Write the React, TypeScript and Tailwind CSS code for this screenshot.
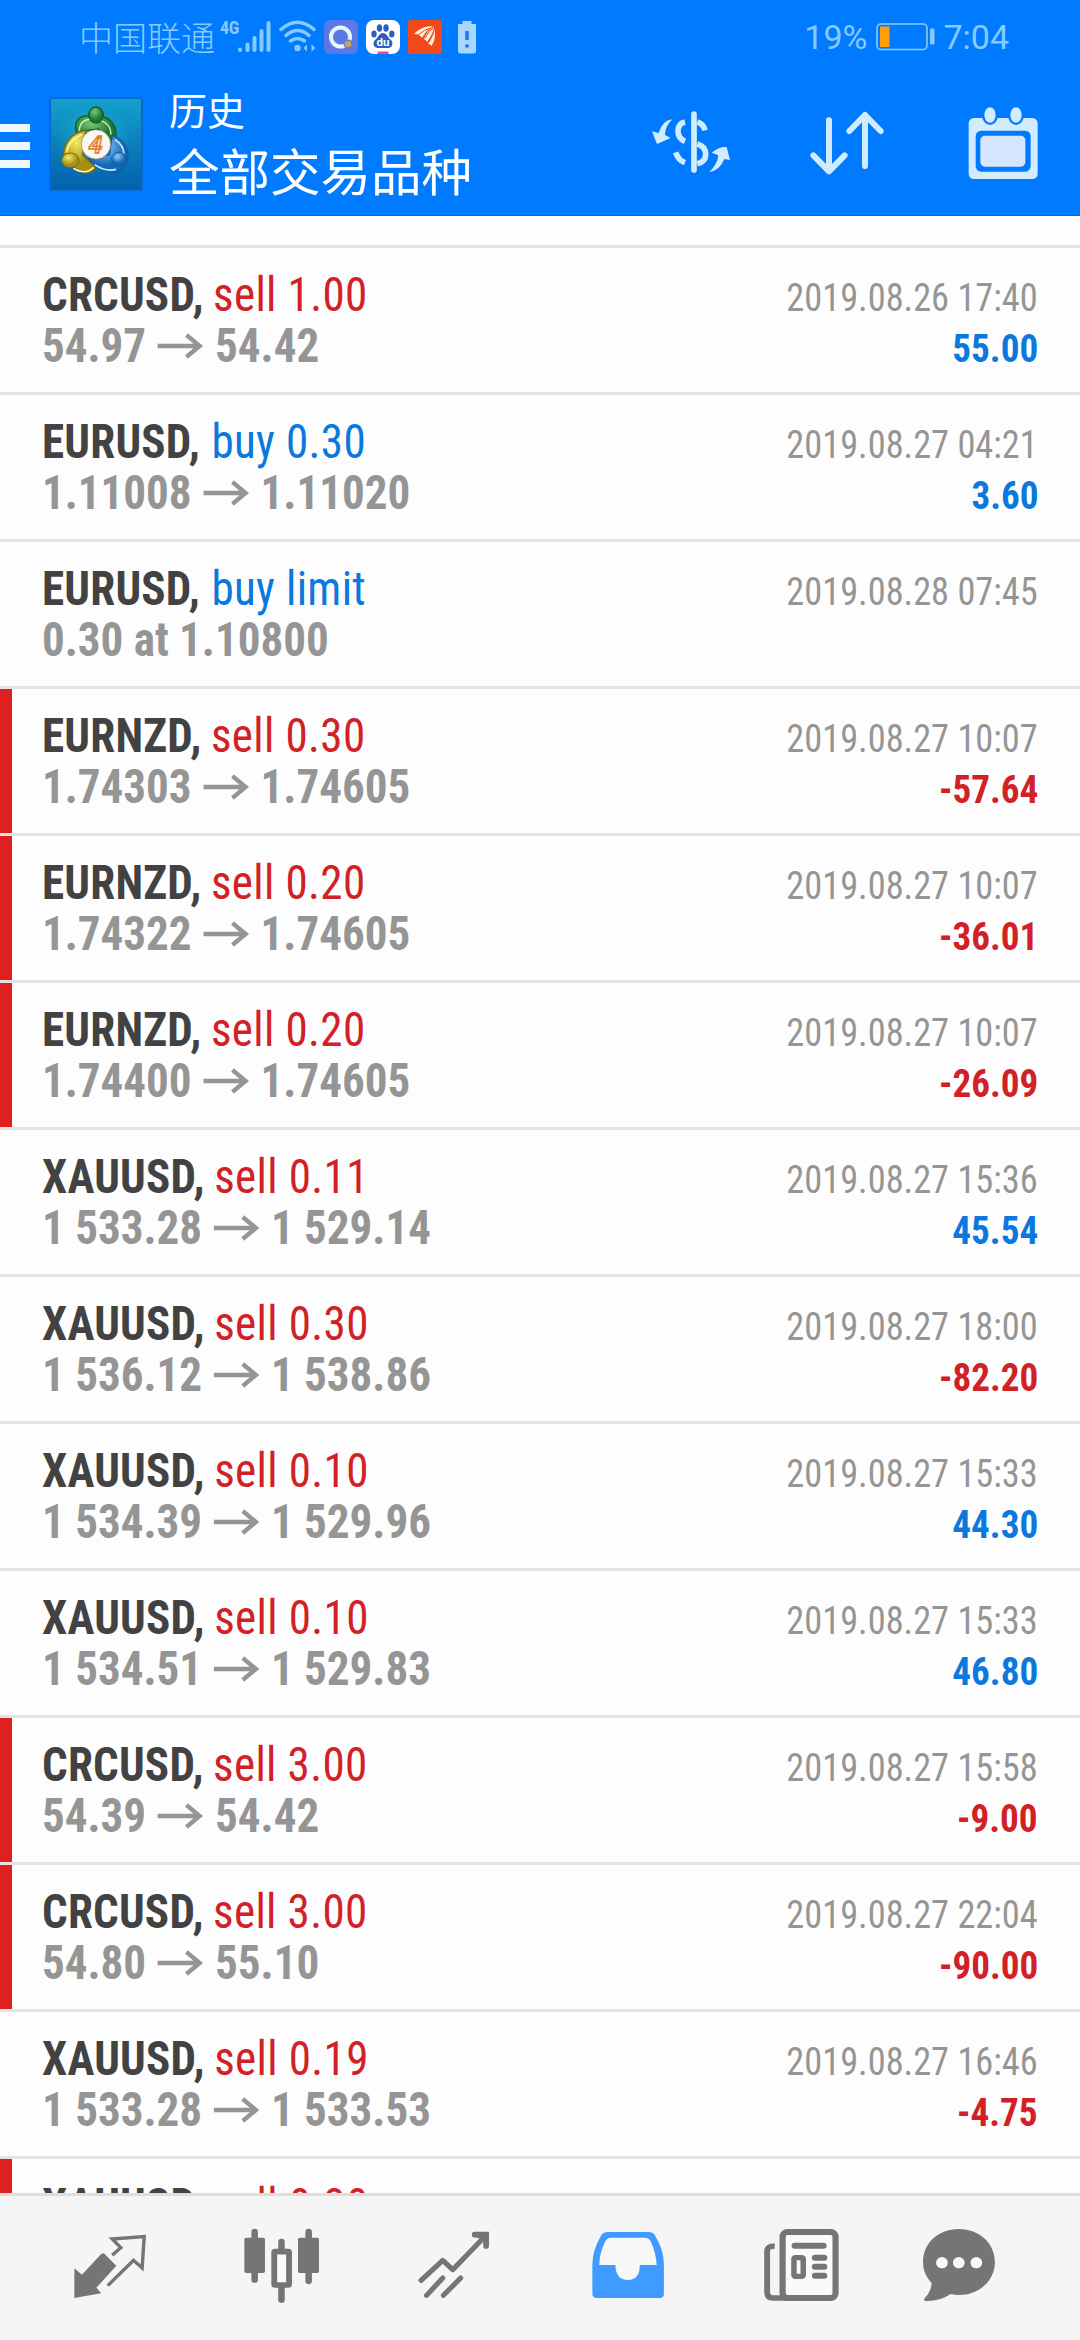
import type { ReactNode } from 'react';
import clsx from 'clsx';

type Deal = {
  symbol: string;
  side: 'sell' | 'buy';
  action: string;
  from?: string;
  to?: string;
  note?: string;
  time?: string;
  profit?: string;
  marked?: boolean;
};

const deals: Deal[] = [
  { symbol: 'CRCUSD', side: 'sell', action: 'sell 1.00', from: '54.97', to: '54.42', time: '2019.08.26 17:40', profit: '55.00' },
  { symbol: 'EURUSD', side: 'buy', action: 'buy 0.30', from: '1.11008', to: '1.11020', time: '2019.08.27 04:21', profit: '3.60' },
  { symbol: 'EURUSD', side: 'buy', action: 'buy limit', note: '0.30 at 1.10800', time: '2019.08.28 07:45' },
  { symbol: 'EURNZD', side: 'sell', action: 'sell 0.30', from: '1.74303', to: '1.74605', time: '2019.08.27 10:07', profit: '-57.64', marked: true },
  { symbol: 'EURNZD', side: 'sell', action: 'sell 0.20', from: '1.74322', to: '1.74605', time: '2019.08.27 10:07', profit: '-36.01', marked: true },
  { symbol: 'EURNZD', side: 'sell', action: 'sell 0.20', from: '1.74400', to: '1.74605', time: '2019.08.27 10:07', profit: '-26.09', marked: true },
  { symbol: 'XAUUSD', side: 'sell', action: 'sell 0.11', from: '1 533.28', to: '1 529.14', time: '2019.08.27 15:36', profit: '45.54' },
  { symbol: 'XAUUSD', side: 'sell', action: 'sell 0.30', from: '1 536.12', to: '1 538.86', time: '2019.08.27 18:00', profit: '-82.20' },
  { symbol: 'XAUUSD', side: 'sell', action: 'sell 0.10', from: '1 534.39', to: '1 529.96', time: '2019.08.27 15:33', profit: '44.30' },
  { symbol: 'XAUUSD', side: 'sell', action: 'sell 0.10', from: '1 534.51', to: '1 529.83', time: '2019.08.27 15:33', profit: '46.80' },
  { symbol: 'CRCUSD', side: 'sell', action: 'sell 3.00', from: '54.39', to: '54.42', time: '2019.08.27 15:58', profit: '-9.00', marked: true },
  { symbol: 'CRCUSD', side: 'sell', action: 'sell 3.00', from: '54.80', to: '55.10', time: '2019.08.27 22:04', profit: '-90.00', marked: true },
  { symbol: 'XAUUSD', side: 'sell', action: 'sell 0.19', from: '1 533.28', to: '1 533.53', time: '2019.08.27 16:46', profit: '-4.75' },
  { symbol: 'XAUUSD', side: 'sell', action: 'sell 0.30', marked: true },
];

function StatusBar() {
  return (
    <div className="flex h-[75px] items-start pt-5 text-[#86cbff]">
      <span className="ml-[79px] mt-px font-['Noto_Sans_CJK_SC',sans-serif] text-[34px] leading-[32px] font-light">中国联通</span>
      <span className="ml-[5px] w-[18px] font-['Roboto_Condensed','Roboto',sans-serif] text-[18px] leading-[16px] font-bold tracking-tight">4G</span>
      <svg className="-ml-[1px] h-[33px] w-[34px]" viewBox="0 0 34 33" stroke="currentColor" strokeWidth="4" strokeLinecap="round">
        <path d="M3 29.5v.5M10.5 24.5V30M17.5 18V30M24.500 11V30M31.500 3V30" />
      </svg>
      <svg className="ml-[8px] h-[33px] w-[38px]" viewBox="0 0 38 33" fill="none" stroke="currentColor" strokeWidth="3.4" strokeLinecap="round">
        <path d="M2 9.500Q18.500-5 35 9.500M7 15.500Q18.500 5.500 30 15.500M11.500 21Q18.500 16 25.500 21" />
        <circle cx="18.500" cy="28" r="3.200" fill="currentColor" stroke="none" />
        <path d="M24.500 28l3.500-3.500v7zM36.500 28l-4-4v7.500z" fill="currentColor" stroke="none" />
      </svg>
      <svg className="ml-[7px] h-[34px] w-[34px]" viewBox="0 0 34 34">
        <rect width="34" height="34" rx="6" fill="#5b78e6" />
        <circle cx="16.500" cy="17" r="9.500" fill="none" stroke="#eaf5ff" strokeWidth="4" />
        <circle cx="24" cy="24" r="4.500" fill="#5b78e6" />
        <circle cx="24" cy="24" r="3.300" fill="#c9a253" />
      </svg>
      <svg className="ml-2 h-[34px] w-[34px]" viewBox="0 0 34 34">
        <rect width="34" height="34" rx="8" fill="#fff" />
        <g fill="#2a5fc0">
          <ellipse cx="8" cy="14" rx="2.700" ry="3.500" />
          <ellipse cx="13.500" cy="8" rx="2.700" ry="3.800" />
          <ellipse cx="20" cy="8" rx="2.700" ry="3.800" />
          <ellipse cx="25.800" cy="14" rx="2.700" ry="3.500" />
          <path d="M17 13c4 0 5 5 8 7 3 3 1 8-3 8H12c-4 0-6-5-3-8 3-2 4-7 8-7z" />
        </g>
        <text x="10.500" y="25.500" fontSize="11.500" fontWeight="700" fontFamily="Roboto, sans-serif" fill="#fff">du</text>
        <rect x="11.500" y="31.500" width="11" height="2.500" fill="#e0527f" />
      </svg>
      <svg className="ml-2 h-[34px] w-[34px]" viewBox="0 0 34 34">
        <rect width="34" height="34" rx="3" fill="#f04a1a" />
        <g fill="#fff3dd">
          <path d="M6 14Q15 5 25 6.500 18 10 14 18q-2-4-8-4z" />
          <path d="M16 19Q20 9 26 7q-1 7-7 15-1-2-3-3z" />
          <path d="M20 24q6-8 6.500-15 2 9-3 17-1-2-3.500-2z" />
        </g>
        <path d="M10 15Q17 9 23 8M17 18Q21 11 25 8" stroke="#f04a1a" strokeWidth="1" fill="none" />
      </svg>
      <svg className="ml-4 mt-px h-[33px] w-[18px]" viewBox="0 0 18 33">
        <path d="M4.500 0h9v3H18v27q0 2.500-2.500 2.500h-13Q0 32.500 0 30V3h4.500z" fill="#a7d6ff" />
        <path d="M9 10v9M9 23.500v3" stroke="#1979ea" strokeWidth="3.500" />
      </svg>
      <span className="ml-auto mt-px font-['Roboto',sans-serif] text-[34px] leading-[32px]">19%</span>
      <svg className="ml-[9px] mt-[3px] h-[28px] w-[59px]" viewBox="0 0 59 28">
        <rect x="1" y="1" width="50" height="25.500" rx="4" fill="none" stroke="currentColor" strokeWidth="1.600" />
        <rect x="4" y="3.500" width="9.500" height="20.500" fill="#ff9d0a" />
        <rect x="54" y="5.500" width="4.500" height="16" rx="1" fill="currentColor" />
      </svg>
      <span className="ml-[8px] mr-[71px] mt-px font-['Roboto',sans-serif] text-[34px] leading-[32px]">7:04</span>
    </div>
  );
}

function AppLogo() {
  return (
    <svg className="h-[94px] w-[94px]" viewBox="26 21 282 282">
      <defs>
        <linearGradient id="tile" x1="0" y1="0" x2="0" y2="1">
          <stop offset="0" stopColor="#13a0cb" />
          <stop offset="1" stopColor="#0560ae" />
        </linearGradient>
        <radialGradient id="glow">
          <stop offset="0" stopColor="#2cc3da" />
          <stop offset="1" stopColor="#119bca" stopOpacity="0" />
        </radialGradient>
        <radialGradient id="green" cx=".4" cy=".3">
          <stop offset="0" stopColor="#7ccb72" />
          <stop offset="1" stopColor="#1d7836" />
        </radialGradient>
        <radialGradient id="gold" cx=".4" cy=".3">
          <stop offset="0" stopColor="#f5ec62" />
          <stop offset="1" stopColor="#a58e13" />
        </radialGradient>
        <radialGradient id="sky" cx=".4" cy=".3">
          <stop offset="0" stopColor="#8ccdf8" />
          <stop offset="1" stopColor="#1568b8" />
        </radialGradient>
      </defs>
      <rect x="26" y="21" width="282" height="282" rx="8" fill="#0768d0" />
      <rect x="32" y="27" width="270" height="270" rx="3" fill="url(#tile)" />
      <ellipse cx="160" cy="130" rx="120" ry="95" fill="url(#glow)" />
      <path d="M110 137C92 76 133 74 167 78c43-2 72 31 55 80l-22-5-25-36-38 5z" fill="url(#green)" stroke="#125d2c" strokeWidth="4" />
      <path d="M117 127Q115 90 152 87M178 91q33 8 34 43" fill="none" stroke="#cdefb8" strokeWidth="4" />
      <path d="M137 120C91 127 65 166 69 207l45 34q35 16 53-7l-40-39z" fill="url(#gold)" stroke="#746a14" strokeWidth="4" />
      <path d="M126 133Q84 151 79 187M99 235q36 22 61-3" fill="none" stroke="#fff59b" strokeWidth="5" />
      <path d="M216 136c32 9 53 45 45 75l-28 37c-31 4-65-15-87-42l61-12z" fill="url(#sky)" stroke="#125b9a" strokeWidth="4" />
      <path d="M224 149q27 17 26 43M163 224q32 22 64 14" fill="none" stroke="#c7eaff" strokeWidth="5" />
      <ellipse cx="167" cy="75" rx="22" ry="24" fill="url(#green)" stroke="#125d2c" strokeWidth="4" />
      <ellipse cx="90" cy="211" rx="26" ry="22" fill="url(#gold)" stroke="#746a14" strokeWidth="3" />
      <ellipse cx="236" cy="207" rx="22" ry="20" fill="url(#sky)" stroke="#125b9a" strokeWidth="3" />
      <circle cx="167" cy="163" r="44" fill="#fbf8f3" stroke="#93886d" strokeWidth="2" />
      <text x="145" y="189" fontSize="74" fontStyle="italic" fontWeight="700" fontFamily="Roboto, sans-serif" fill="#fde1c5" stroke="#e07a2c" strokeWidth="4">4</text>
    </svg>
  );
}

function CurrencyIcon() {
  return (
    <svg className="h-[62px] w-[80px]" viewBox="90 63 240 186" fill="#d2ecff" stroke="#d2ecff">
      <path d="M219 72v168" strokeWidth="17" strokeLinecap="round" />
      <path d="M192 96Q170 101 171 125q1 21 21 29M229 96q18 5 23 25M229 162q25 7 25 31 0 23-25 28M192 218q-21-8-28-31" fill="none" strokeWidth="17" />
      <path d="M154 88q-31 4-41 41l-20-5 15 38 41-18-17-9q0-26 22-47z" stroke="none" />
      <path d="M265 246q32-5 45-39l17 3-10-39q-23-2-45 17l20 8q-3 28-27 50z" stroke="none" />
    </svg>
  );
}

function SortIcon() {
  return (
    <svg className="h-[64px] w-[74px]" viewBox="567 64 222 192" fill="none" stroke="#d2ecff" strokeWidth="18" strokeLinecap="round" strokeLinejoin="round">
      <path d="M624 92v153M577 197l47 48 47-48" />
      <path d="M732 229V76M685 124l47-48 47 48" />
    </svg>
  );
}

function CalendarIcon() {
  return (
    <svg className="h-[72px] w-[70px]" viewBox="1041 50 210 216">
      <rect x="1043" y="83" width="207" height="183" rx="16" fill="#d2ecff" />
      <rect x="1064" y="121" width="165" height="123" rx="16" fill="#007aff" />
      <rect x="1078" y="136" width="135" height="93" rx="14" fill="#d6e6ff" />
      <ellipse cx="1107" cy="74" rx="24" ry="30" fill="#007aff" />
      <ellipse cx="1185" cy="74" rx="24" ry="30" fill="#007aff" />
      <ellipse cx="1107" cy="74" rx="17" ry="23" fill="#d2ecff" />
      <ellipse cx="1185" cy="74" rx="17" ry="23" fill="#d2ecff" />
    </svg>
  );
}

function Toolbar() {
  return (
    <div className="flex h-[141px] items-start">
      <div className="mt-[49px] flex w-[30px] flex-col gap-[10px]">
        <span className="h-2 bg-[#eff8ff]" />
        <span className="h-2 bg-[#eff8ff]" />
        <span className="h-2 bg-[#eff8ff]" />
      </div>
      <div className="ml-[19px] mt-[22px]">
        <AppLogo />
      </div>
      <div className="ml-[26px] mt-[14px] font-['Noto_Sans_CJK_SC',sans-serif] text-white">
        <div className="text-[38px] leading-[40px]">历史</div>
        <div className="mt-[10px] text-[50.5px] leading-[60px]">全部交易品种</div>
      </div>
      <div className="ml-auto mr-[42px] mt-8 flex items-start">
        <div className="mt-1">
          <CurrencyIcon />
        </div>
        <div className="ml-[79px] mt-1">
          <SortIcon />
        </div>
        <div className="ml-[84px]">
          <CalendarIcon />
        </div>
      </div>
    </div>
  );
}

function PriceArrow() {
  return (
    <svg className="mr-[12px] ml-[12.5px] mt-[13px] h-[26px] w-[49px]" viewBox="0 0 49 26" fill="none" stroke="currentColor" strokeWidth="4.600">
      <path d="M0 13h45M31 2l14 11-14 11" />
    </svg>
  );
}

// Roboto Condensed is squeezed a little further, away from the outer edge of its column.
function DealRow({ deal }: { deal: Deal }) {
  return (
    <li className="flex h-[147px] shrink-0 border-b-[3px] border-[#e3e3e3] font-['Roboto_Condensed','Roboto',sans-serif]">
      <span className={clsx('w-3 shrink-0', deal.marked && 'bg-[#e02020]')} />
      <div className="ml-[30px] flex flex-1 origin-left scale-x-[0.938] flex-col pt-[21px] text-[48px] leading-[51px] whitespace-nowrap">
        <div className={clsx('flex', deal.side === 'sell' ? 'gap-[10px]' : 'gap-[12px]')}>
          <span className="font-bold tracking-[0.25px] text-[#424242]">{deal.symbol},</span>
          <span className={clsx('tracking-[0.4px]', deal.side === 'sell' ? 'text-[#d22027]' : 'text-[#0a78dc]')}>
            {deal.action}
          </span>
        </div>
        {deal.note && <div className="font-bold text-[#959595]">{deal.note}</div>}
        {deal.from && (
          <div className="flex font-bold text-[#959595]">
            <span>{deal.from}</span>
            <PriceArrow />
            <span>{deal.to}</span>
          </div>
        )}
      </div>
      <div className="mr-[42px] flex flex-col items-end pt-[25px] text-[39px] leading-[51px] whitespace-nowrap">
        {deal.time && <span className="origin-right scale-x-[0.932] text-[#959595]">{deal.time}</span>}
        {deal.profit && (
          <span
            className={clsx(
              'origin-right scale-x-[0.952] font-bold',
              deal.profit.startsWith('-') ? 'text-[#d22027]' : 'text-[#0a78dc]',
            )}
          >
            {deal.profit}
          </span>
        )}
      </div>
    </li>
  );
}

function NavButton({ className, children }: { className?: string; children: ReactNode }) {
  return <button className={clsx('h-[75px] w-[76px] shrink-0', className)}>{children}</button>;
}

function BottomNav() {
  return (
    <nav className="flex h-[147px] shrink-0 items-start border-t-[3px] border-[#dedede] bg-[#f5f5f5] pt-[32px] text-[#757575]">
      <NavButton className="ml-[73px]">
        <svg className="h-full w-full" viewBox="212 324 221 225" preserveAspectRatio="none">
          <path d="M216 445l22 19 56-62q5-5 10 0l34 35-58 66 14 17-78 14z" fill="currentColor" />
          <path d="M326 406l25-23-25-26 93-7-6 94-25-23-75 76" fill="none" stroke="currentColor" strokeWidth="10" />
        </svg>
      </NavButton>
      <NavButton className="ml-[95px]">
        <svg className="h-full w-full" viewBox="708 324 221 225" preserveAspectRatio="none">
          <path d="M739 336v143M896 336v147M817 366v30M817 500v39" stroke="currentColor" strokeWidth="19" strokeLinecap="round" />
          <rect x="709" y="353" width="60" height="106" rx="5" fill="currentColor" />
          <rect x="865" y="353" width="61" height="106" rx="5" fill="currentColor" />
          <rect x="796" y="395" width="43" height="100" rx="2" fill="#fafafa" stroke="currentColor" strokeWidth="17" />
        </svg>
      </NavButton>
      <NavButton className="ml-[98px]">
        <svg className="h-full w-full" viewBox="1213 324 221 225" preserveAspectRatio="none" fill="none" stroke="currentColor" strokeWidth="15" strokeLinecap="round" strokeLinejoin="round">
          <path d="M1222 481l63-60 29 28 92-98M1238 526l47-52M1287 526l50-52" />
          <path d="M1378 344h33v34" strokeWidth="17" strokeLinejoin="miter" />
          <path d="M1378 348l14 6h22v-14z" fill="currentColor" strokeWidth="4" />
        </svg>
      </NavButton>
      <NavButton className="ml-[97px] text-[#3f9bff]">
        <svg className="h-full w-full" viewBox="144 324 221 225" preserveAspectRatio="none">
          <path d="M193 336h118q13 0 19 10 26 45 26 87v88q0 13-13 13H161q-13 0-13-13v-88q0-42 26-87 6-10 19-10z" fill="currentColor" />
          <path d="M202 353h99q11 0 16 10 16 34 18 72h-49q0 45-35 45t-36-45h-47q1-38 18-72 5-10 16-10z" fill="#f7f7f7" />
        </svg>
      </NavButton>
      <NavButton className="ml-[96px]">
        <svg className="h-full w-full" viewBox="643 324 221 225" preserveAspectRatio="none" fill="none" stroke="currentColor">
          <path d="M677 379q-22-2-22 15v123q0 17 17 17h170" strokeWidth="17" />
          <rect x="700" y="336" width="154" height="198" rx="14" strokeWidth="18" fill="#fafafa" />
          <path d="M735 377h84M794 413h27M794 440h27M794 467h27" strokeWidth="18" strokeLinecap="round" />
          <rect x="733" y="413" width="27" height="56" rx="4" strokeWidth="16" />
        </svg>
      </NavButton>
      <NavButton className="ml-[83px]">
        <svg className="h-full w-full" viewBox="1106 324 221 225" preserveAspectRatio="none">
          <path d="M1213 327c60 0 105 43 105 99s-45 99-105 99q-12 0-24-3-30 22-71 21-10 0-4-8 19-22 20-46c-16-18-25-38-25-63 0-56 44-99 104-99z" fill="currentColor" />
          <g fill="#fafafa">
            <circle cx="1164" cy="428" r="17" />
            <circle cx="1213" cy="428" r="17" />
            <circle cx="1264" cy="428" r="17" />
          </g>
        </svg>
      </NavButton>
    </nav>
  );
}

export default function App() {
  return (
    <div className="flex h-[2340px] w-[1080px] flex-col overflow-hidden bg-[#fdfdfd]">
      <header className="h-[216px] shrink-0 border-b border-[#1468c8] bg-[#007aff]">
        <StatusBar />
        <Toolbar />
      </header>
      <div className="h-8 shrink-0 border-b-[3px] border-[#e3e3e3]" />
      <ul className="flex min-h-0 flex-1 flex-col overflow-hidden">
        {deals.map((deal, i) => (
          <DealRow key={i} deal={deal} />
        ))}
      </ul>
      <BottomNav />
    </div>
  );
}
